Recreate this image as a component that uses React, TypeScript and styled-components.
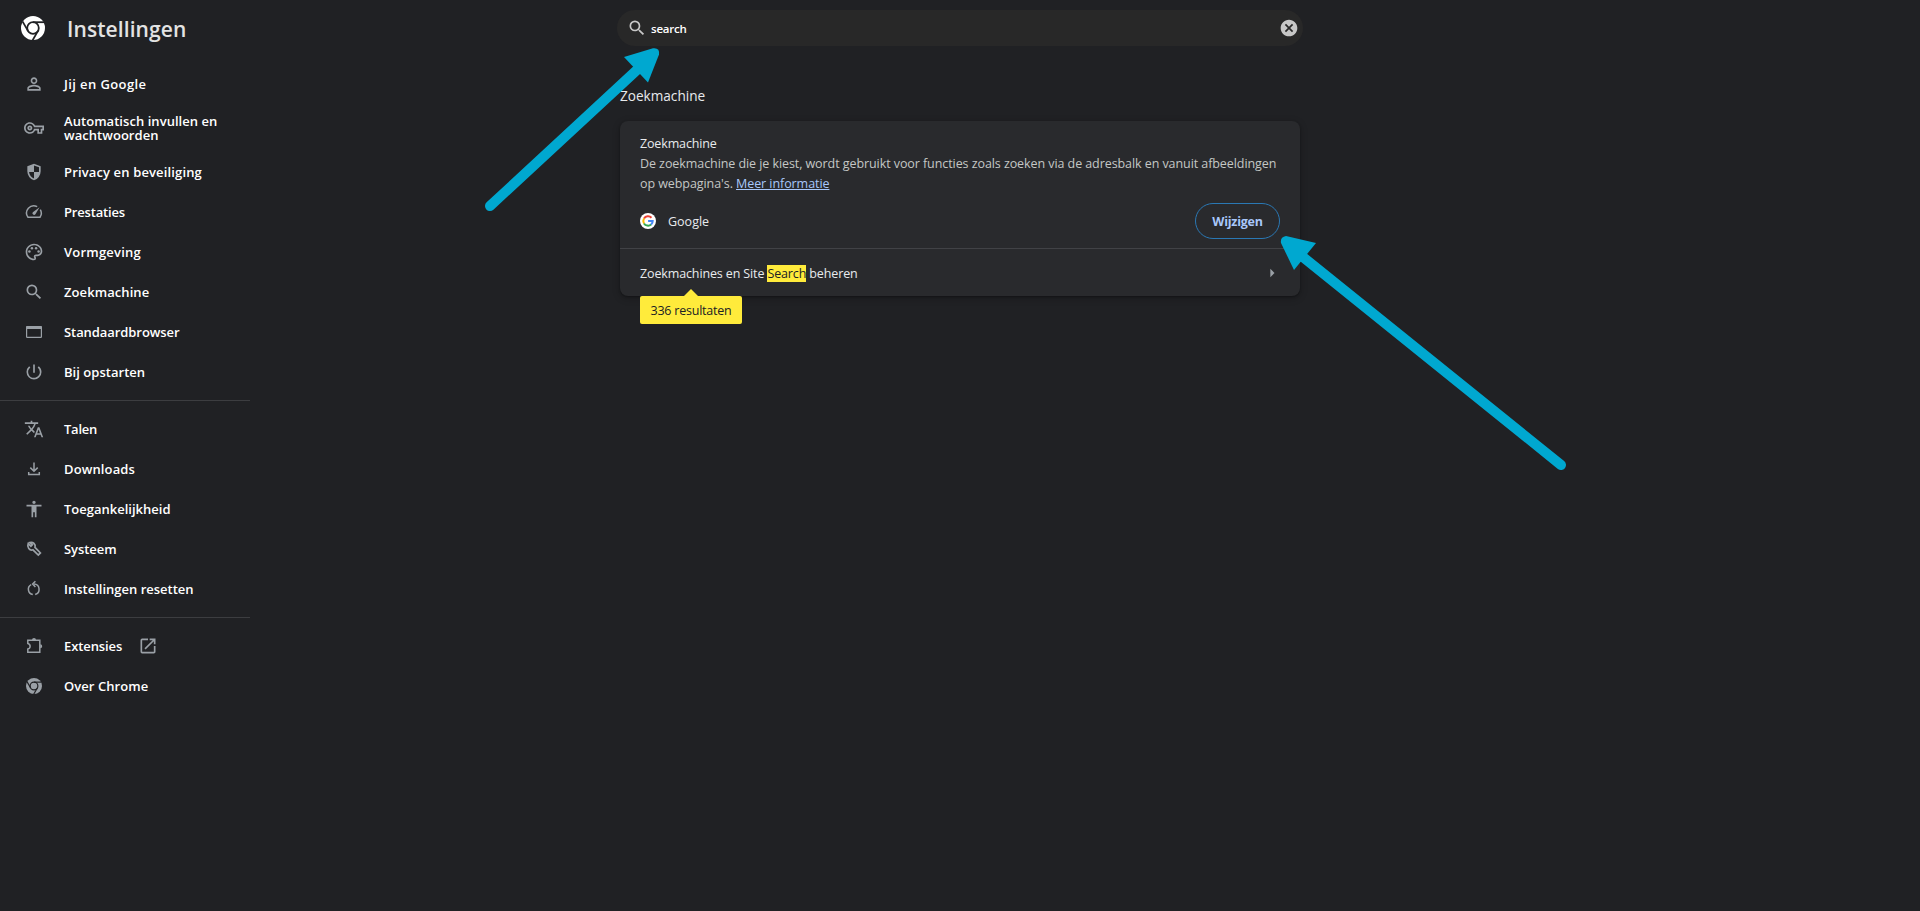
import React, { ReactNode } from "react";
import styled, { createGlobalStyle } from "styled-components";
import {
  MdPersonOutline,
  MdOutlineVpnKey,
  MdOutlinePalette,
  MdSearch,
  MdPowerSettingsNew,
  MdTranslate,
  MdAccessibility,
  MdCancel,
  MdArrowRight,
  MdOpenInNew,
} from "react-icons/md";

const GlobalStyle = createGlobalStyle`
  * { box-sizing: border-box; }
  body {
    margin: 0;
    background: #202124;
    color: #e8eaed;
    font-family: "Open Sans", "Noto Sans", sans-serif;
    font-size: 12.5px;
    overflow: hidden;
  }
`;

const Page = styled.div`
  position: relative;
  display: flex;
  width: 1920px;
  height: 911px;
`;

const Sidebar = styled.aside`
  width: 250px;
  flex: none;
`;

const Brand = styled.header`
  display: flex;
  align-items: center;
  gap: 22px;
  height: 56px;
  padding-left: 21px;
  margin-bottom: 8px;
`;

const BrandTitle = styled.h1`
  margin: 2px 0 0;
  font-size: 21px;
  font-weight: 600;
  line-height: 28px;
  letter-spacing: 0.08px;
  color: #e3e3e3;
`;

const NavGroup = styled.nav`
  padding-bottom: 8px;
  & + & {
    border-top: 1px solid #3c3d40;
    padding-top: 8px;
  }
`;

const NavItem = styled.a<{ $tall?: boolean }>`
  display: flex;
  align-items: center;
  gap: 20px;
  height: ${(p) => (p.$tall ? 48 : 40)}px;
  padding-left: 24px;
  color: #fff;
`;

const NavIcon = styled.span`
  display: flex;
  align-items: center;
  justify-content: center;
  flex: none;
  width: 20px;
  height: 20px;
  color: #9aa0a6;
`;

const NavLabel = styled.span<{ $spacing?: number }>`
  font-size: 13px;
  font-weight: 600;
  line-height: 14px;
  white-space: pre-line;
  letter-spacing: ${(p) => p.$spacing ?? 0}px;
`;

const ExternalIcon = styled.span`
  display: flex;
  margin-left: -4px;
  color: #9aa0a6;
`;

const Main = styled.main`
  width: 686px;
  margin-left: 367px;
  padding-top: 10px;
`;

const SearchBar = styled.div`
  display: flex;
  align-items: center;
  height: 36px;
  padding: 0 4px 0 10px;
  border-radius: 18px;
  background: #282828;
  color: #c7c7c7;
`;

const SearchText = styled.span`
  flex: 1;
  margin-left: 4px;
  color: #fff;
  font-size: 11.5px;
  font-weight: 600;
  letter-spacing: -0.2px;
`;

const Section = styled.section`
  width: 680px;
  margin-left: 3px;
`;

const SectionTitle = styled.h2`
  margin: 39px 0 15px;
  font-size: 13.6px;
  font-weight: 400;
  line-height: 21px;
`;

const Card = styled.div`
  height: 175px;
  border-radius: 8px;
  background: #292a2d;
  box-shadow: 0 1px 2px rgba(0, 0, 0, 0.3), 0 2px 6px 2px rgba(0, 0, 0, 0.15);
`;

const EngineBlock = styled.div`
  height: 128px;
  padding: 13px 20px 0;
  border-bottom: 1px solid #414246;
`;

const Line = styled.div<{ $muted?: boolean; $spacing?: number }>`
  line-height: 20px;
  white-space: nowrap;
  color: ${(p) => (p.$muted ? "#c4c7c5" : "#e8eaed")};
  letter-spacing: ${(p) => p.$spacing ?? 0}px;
`;

const Link = styled.a`
  color: #a8c7fa;
  text-decoration: underline;
`;

const EngineRow = styled.div`
  display: flex;
  align-items: center;
  height: 36px;
  margin-top: 9px;
`;

const EngineName = styled.span`
  flex: 1;
  margin-left: 12px;
`;

const ChangeButton = styled.button`
  width: 85px;
  height: 36px;
  padding: 1px 0 0;
  border: 1px solid #2a78b4;
  border-radius: 18px;
  background: transparent;
  color: #a8c7fa;
  font: inherit;
  font-weight: 700;
  letter-spacing: -0.25px;
`;

const ManageRow = styled.div`
  position: relative;
  display: flex;
  align-items: center;
  justify-content: space-between;
  height: 47px;
  padding: 0 18px 0 20px;
  color: #9aa0a6;
`;

const ManageLabel = styled(Line)`
  padding-top: 2px;
`;

const Mark = styled.mark`
  background: #ffeb3b;
  color: #202124;
`;

const ResultBubble = styled.div`
  position: absolute;
  top: 47px;
  left: 20px;
  width: 102px;
  height: 28px;
  border-radius: 2px;
  background: #ffeb3b;
  color: #202124;
  line-height: 29px;
  letter-spacing: -0.22px;
  text-align: center;
  &::before {
    content: "";
    position: absolute;
    left: 44px;
    top: -7px;
    border: 7px solid transparent;
    border-top: 0;
    border-bottom-color: #ffeb3b;
  }
`;

const Annotations = styled.svg`
  position: absolute;
  inset: 0;
  pointer-events: none;
`;

const Glyph = ({ children }: { children: ReactNode }) => (
  <svg width="20" height="20" viewBox="0 0 20 20" fill="none" stroke="currentColor" strokeWidth="1.5">
    {children}
  </svg>
);

const ChromeMark = ({ size, color }: { size: number; color: string }) => (
  <svg width={size} height={size} viewBox="0 0 24 24">
    <circle cx="12" cy="12" r="12" fill={color} />
    <g fill="none" stroke="#202124" strokeWidth="1.8">
      <circle cx="12" cy="12" r="5.8" />
      <path d="M12 6.2H23" />
      <path d="M7 14.9 1.5 5.4" />
      <path d="M17 14.9 11.5 24.4" />
    </g>
  </svg>
);

const GoogleMark = () => (
  <svg width="16" height="16" viewBox="0 0 16 16">
    <circle cx="8" cy="8" r="8" fill="#fff" />
    <g fill="none" strokeWidth="2">
      <path d="M4 5.6A4.7 4.7 0 0 1 11.5 4.8" stroke="#ea4335" />
      <path d="M4 10.4A4.7 4.7 0 0 1 4 5.6" stroke="#fbbc05" />
      <path d="M11.1 11.5A4.7 4.7 0 0 1 4 10.4" stroke="#34a853" />
      <path d="M8.1 8H12.7A4.7 4.7 0 0 1 11.1 11.5" stroke="#4285f4" />
    </g>
  </svg>
);

const Shield = () => (
  <svg width="20" height="20" viewBox="0 -960 960 960" fill="currentColor">
    <path
      transform="translate(960 0) scale(-1 1)"
      d="M480-80q-139-35-229.500-159.500T160-516v-244l320-120 320 120v244q0 152-90.500 276.500T480-80Zm0-84q97-30 162-118.500T718-480H480v-315l-240 90v207q0 7 2 18h238v316Z"
    />
  </svg>
);

const Speed = () => (
  <Glyph>
    <path d="M13.2 4.7A7.2 7.2 0 0 0 4 15.3H16A7.2 7.2 0 0 0 16.3 7.6" />
    <path d="M15.6 5.2 11.4 12.2A1.6 1.6 0 0 1 8.8 10.2Z" fill="currentColor" stroke="none" />
  </Glyph>
);

const BrowserWindow = () => (
  <Glyph>
    <rect x="2.6" y="4.6" width="14.8" height="10.8" rx="0.6" strokeWidth="1.2" />
    <path d="M2.5 5.5H17.5" strokeWidth="3" />
  </Glyph>
);

const Download = () => (
  <Glyph>
    <path d="M10 3.5V12M6.3 8.6 10 12.2 13.7 8.6M4.7 13V15.6H15.3V13" />
  </Glyph>
);

const Wrench = () => (
  <Glyph>
    <path
      d="M4.2 4.6 6.9 7.2 8.3 5.8 5.8 3.5C9 2.6 12 5 11 8.4L16.4 13.9 14.3 16.1 8.9 10.8C5.6 11.9 2.7 8.4 4.2 4.6Z"
      strokeWidth="1.7"
    />
  </Glyph>
);

const Reset = () => (
  <Glyph>
    <path d="M7.2 5.6A5.3 5.3 0 0 0 8.8 15.5M11.2 15.5A5.3 5.3 0 0 0 10 5.1" />
    <path d="M11.4 2.2 8.6 5.1 11.4 8" />
  </Glyph>
);

const Puzzle = () => (
  <Glyph>
    <path d="M3.8 4.2H15.8V16.2H3.8V13C6.9 12.4 6.9 8 3.8 7.4Z" />
    <path d="M8 4A2 2 0 0 1 12 4ZM16.2 8.3A2 2 0 0 1 16.2 12.3Z" fill="currentColor" stroke="none" />
  </Glyph>
);

interface Entry {
  label: string;
  icon: ReactNode;
  spacing?: number;
  tall?: boolean;
  external?: boolean;
}

const groups: Entry[][] = [
  [
    { label: "Jij en Google", icon: <MdPersonOutline size={20} />, spacing: 0.4 },
    { label: "Automatisch invullen en\nwachtwoorden", icon: <MdOutlineVpnKey size={20} />, spacing: 0.05, tall: true },
    { label: "Privacy en beveiliging", icon: <Shield />, spacing: 0.14 },
    { label: "Prestaties", icon: <Speed />, spacing: -0.17 },
    { label: "Vormgeving", icon: <MdOutlinePalette size={20} />, spacing: 0.22 },
    { label: "Zoekmachine", icon: <MdSearch size={20} />, spacing: 0.08 },
    { label: "Standaardbrowser", icon: <BrowserWindow />, spacing: -0.07 },
    { label: "Bij opstarten", icon: <MdPowerSettingsNew size={20} />, spacing: 0.03 },
  ],
  [
    { label: "Talen", icon: <MdTranslate size={20} />, spacing: -0.25 },
    { label: "Downloads", icon: <Download />, spacing: 0.13 },
    { label: "Toegankelijkheid", icon: <MdAccessibility size={20} /> },
    { label: "Systeem", icon: <Wrench />, spacing: -0.05 },
    { label: "Instellingen resetten", icon: <Reset /> },
  ],
  [
    { label: "Extensies", icon: <Puzzle />, spacing: -0.1, external: true },
    { label: "Over Chrome", icon: <ChromeMark size={16} color="#9aa0a6" />, spacing: 0.06 },
  ],
];

export default function App() {
  return (
    <Page>
      <GlobalStyle />
      <Sidebar>
        <Brand>
          <ChromeMark size={24} color="#fff" />
          <BrandTitle>Instellingen</BrandTitle>
        </Brand>
        {groups.map((entries, index) => (
          <NavGroup key={index}>
            {entries.map((entry) => (
              <NavItem key={entry.label} $tall={entry.tall}>
                <NavIcon>{entry.icon}</NavIcon>
                <NavLabel $spacing={entry.spacing}>{entry.label}</NavLabel>
                {entry.external && (
                  <ExternalIcon>
                    <MdOpenInNew size={20} />
                  </ExternalIcon>
                )}
              </NavItem>
            ))}
          </NavGroup>
        ))}
      </Sidebar>
      <Main>
        <SearchBar>
          <MdSearch size={20} />
          <SearchText>search</SearchText>
          <MdCancel size={20} />
        </SearchBar>
        <Section>
          <SectionTitle>Zoekmachine</SectionTitle>
          <Card>
            <EngineBlock>
              <Line $spacing={-0.15}>Zoekmachine</Line>
              <Line $muted $spacing={-0.075}>
                De zoekmachine die je kiest, wordt gebruikt voor functies zoals zoeken via de adresbalk en vanuit afbeeldingen
              </Line>
              <Line $muted $spacing={-0.07}>
                op webpagina's. <Link>Meer informatie</Link>
              </Line>
              <EngineRow>
                <GoogleMark />
                <EngineName>Google</EngineName>
                <ChangeButton>Wijzigen</ChangeButton>
              </EngineRow>
            </EngineBlock>
            <ManageRow>
              <ManageLabel $spacing={-0.13}>
                Zoekmachines en Site <Mark>Search</Mark> beheren
              </ManageLabel>
              <MdArrowRight size={20} />
              <ResultBubble>336 resultaten</ResultBubble>
            </ManageRow>
          </Card>
        </Section>
      </Main>
      <Annotations width="1920" height="911" viewBox="0 0 1920 911">
        <g stroke="#00a8d0" strokeWidth="10" strokeLinecap="round">
          <path d="M490 206 638 69" />
          <path d="M1561 465 1298 253" />
        </g>
        <g fill="#00a8d0">
          <path d="M624 57 653 48.3Q660 47.5 659 54.5L648 82.5Z" />
          <path d="M1316 243 1286 236Q1280 237 1281 243L1294 270Z" />
        </g>
      </Annotations>
    </Page>
  );
}
